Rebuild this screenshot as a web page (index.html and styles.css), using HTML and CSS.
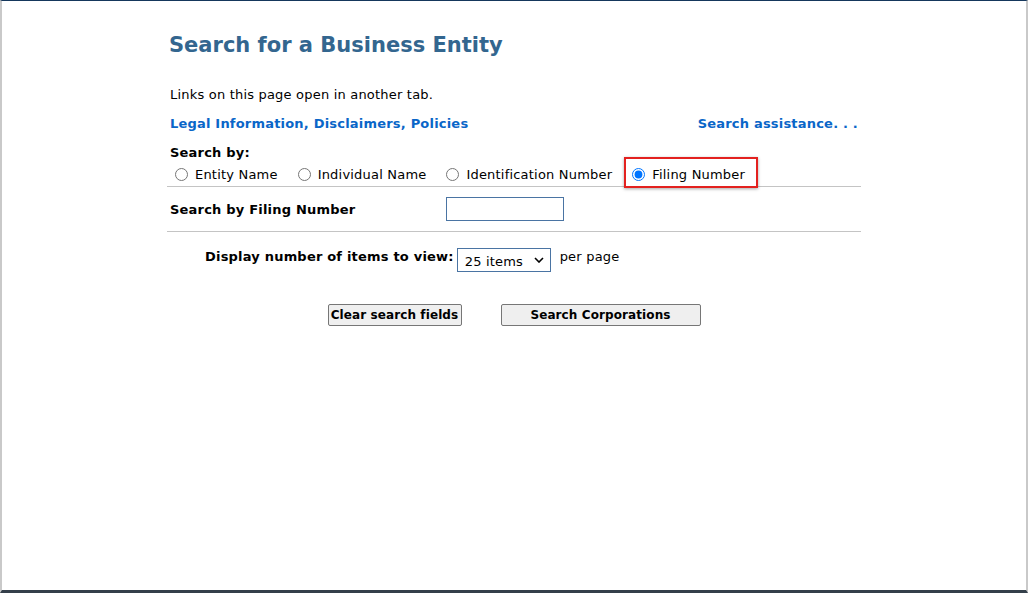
FILE: index.html
```html
<!DOCTYPE html>
<html lang="en">
<head>
    <meta charset="UTF-8">
    <title>Search for a Business Entity</title>
    <link rel="stylesheet" href="styles.css">
</head>
<body>
<div class="frame">
    <div class="content">
        <h1 class="title">Search for a Business Entity</h1>

        <p class="note">Links on this page open in another tab.</p>

        <div class="links">
            <a href="#">Legal Information, Disclaimers, Policies</a>
            <a href="#">Search assistance. . .</a>
        </div>

        <div class="search-by">Search by:</div>
        <div class="radios">
            <label class="opt"><input type="radio" name="by"> Entity Name</label>
            <label class="opt"><input type="radio" name="by"> Individual Name</label>
            <label class="opt"><input type="radio" name="by"> Identification Number</label>
            <label class="opt picked"><input type="radio" name="by" checked> Filing Number</label>
        </div>

        <div class="field-row">
            <label for="filing">Search by Filing Number</label>
            <input type="text" id="filing" class="text-input">
        </div>

        <div class="display-row">
            <label for="per">Display number of items to view:</label>
            <select id="per" class="items">
                <option>25 items</option>
                <option>50 items</option>
                <option>100 items</option>
            </select>
            <span class="per-page">per page</span>
        </div>

        <div class="buttons">
            <button class="btn clear">Clear search fields</button>
            <button class="btn wide">Search Corporations</button>
        </div>
    </div>
</div>
</body>
</html>
```

FILE: styles.css
```css
html, body {
    margin: 0;
    padding: 0;
}

body {
    font-family: Verdana, "DejaVu Sans", sans-serif;
    font-size: 13px;
    letter-spacing: 0.2px;
    color: #000;
    background: #fff;
}

.frame {
    height: 593px;
    box-sizing: border-box;
    border-top: 1px solid #15375c;
    border-left: 2px solid #c9c9c9;
    border-right: 2px solid #c9c9c9;
    border-bottom: 3px solid #343f4a;
}

.content {
    width: 694px;
    margin: 0 auto;
}

.title {
    margin: 32px 0 0 2px;
    font-size: 21px;
    line-height: 25px;
    font-weight: bold;
    letter-spacing: 0;
    color: #33668f;
}

.note {
    margin: 29px 0 0 3px;
    line-height: 16px;
}

.links {
    display: flex;
    justify-content: space-between;
    margin: 13px 3px 0 3px;
    line-height: 16px;
}

.links a {
    color: #0a66c8;
    font-weight: bold;
    text-decoration: none;
}

.search-by {
    margin: 13px 0 0 3px;
    font-weight: bold;
    line-height: 16px;
}

.radios {
    display: flex;
    align-items: center;
    height: 24px;
    padding-top: 1px;
    padding-left: 8px;
    border-bottom: 1px solid #c4c4c4;
}

.opt {
    display: flex;
    align-items: center;
    margin-right: 20px;
    position: relative;
}

.opt input {
    width: 13px;
    height: 13px;
    margin: 0 7px 0 0;
}

.picked::after {
    content: "";
    position: absolute;
    box-sizing: border-box;
    left: -8px;
    top: -10px;
    width: 134px;
    height: 31px;
    border: 2px solid #e3211f;
    box-shadow: 0 1px 3px rgba(0, 0, 0, 0.35);
}

.field-row {
    display: grid;
    grid-template-columns: 276px 118px;
    align-items: center;
    height: 44px;
    padding-left: 3px;
    border-bottom: 1px solid #c4c4c4;
    font-weight: bold;
}

.text-input {
    box-sizing: border-box;
    width: 118px;
    height: 24px;
    border: 1px solid #4a74a3;
    margin: 0;
    padding: 0 4px;
    font: inherit;
}

.display-row {
    display: flex;
    align-items: flex-start;
    margin-top: 16px;
    padding-left: 38px;
    font-weight: bold;
    line-height: 16px;
}

.display-row label {
    margin-top: 1px;
}

.items {
    appearance: none;
    -webkit-appearance: none;
    box-sizing: border-box;
    width: 94px;
    height: 24px;
    margin: 0 9px 0 3px;
    padding: 3px 0 0 7px;
    border: 1px solid #4a74a3;
    border-radius: 0;
    background: #fff url("data:image/svg+xml;utf8,<svg xmlns='http://www.w3.org/2000/svg' width='10' height='6' viewBox='0 0 10 6'><path d='M1 1l4 4 4-4' fill='none' stroke='black' stroke-width='1.6'/></svg>") no-repeat right 6px center;
    font-family: inherit;
    font-size: 13px;
    letter-spacing: 0.2px;
    color: #000;
}

.per-page {
    font-weight: normal;
    margin-top: 1px;
}

.buttons {
    display: flex;
    justify-content: center;
    gap: 39px;
    margin-top: 32px;
}

.btn {
    box-sizing: border-box;
    height: 22px;
    padding: 0;
    background: #efefef;
    border: 1px solid #767676;
    border-radius: 2px;
    font-family: inherit;
    font-size: 12px;
    font-weight: bold;
    letter-spacing: 0.1px;
    color: #000;
}

.clear {
    width: 134px;
}

.wide {
    width: 200px;
}
```
